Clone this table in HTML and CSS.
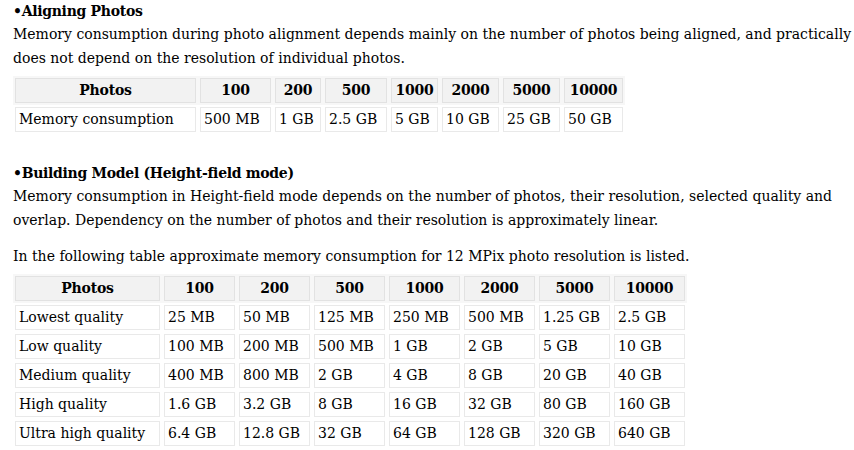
FILE: index.html
```html
<!DOCTYPE html>
<html>
<head>
<meta charset="utf-8">
<link rel="stylesheet" href="styles.css">
</head>
<body>
<div class="page">
  <h3 class="title">•Aligning Photos</h3>
  <p class="para">Memory consumption during photo alignment depends mainly on the number of photos being aligned, and practically does not depend on the resolution of individual photos.</p>
  <table class="grid grid-align">
    <tr class="head">
      <th class="w181">Photos</th>
      <th class="w71">100</th>
      <th class="w46">200</th>
      <th class="w62">500</th>
      <th class="w47">1000</th>
      <th class="w57">2000</th>
      <th class="w57">5000</th>
      <th class="w59">10000</th>
    </tr>
    <tr>
      <td>Memory consumption</td>
      <td>500 MB</td>
      <td>1 GB</td>
      <td>2.5 GB</td>
      <td>5 GB</td>
      <td>10 GB</td>
      <td>25 GB</td>
      <td>50 GB</td>
    </tr>
  </table>

  <h3 class="title title-2">•Building Model (Height-field mode)</h3>
  <p class="para">Memory consumption in Height-field mode depends on the number of photos, their resolution, selected quality and overlap. Dependency on the number of photos and their resolution is approximately linear.</p>
  <p class="para para-gap">In the following table approximate memory consumption for 12 MPix photo resolution is listed.</p>
  <table class="grid grid-model">
    <tr class="head">
      <th class="w145">Photos</th>
      <th class="w71">100</th>
      <th class="w71">200</th>
      <th class="w71">500</th>
      <th class="w71">1000</th>
      <th class="w71">2000</th>
      <th class="w71">5000</th>
      <th class="w71">10000</th>
    </tr>
    <tr>
      <td>Lowest quality</td><td>25 MB</td><td>50 MB</td><td>125 MB</td><td>250 MB</td><td>500 MB</td><td>1.25 GB</td><td>2.5 GB</td>
    </tr>
    <tr>
      <td>Low quality</td><td>100 MB</td><td>200 MB</td><td>500 MB</td><td>1 GB</td><td>2 GB</td><td>5 GB</td><td>10 GB</td>
    </tr>
    <tr>
      <td>Medium quality</td><td>400 MB</td><td>800 MB</td><td>2 GB</td><td>4 GB</td><td>8 GB</td><td>20 GB</td><td>40 GB</td>
    </tr>
    <tr>
      <td>High quality</td><td>1.6 GB</td><td>3.2 GB</td><td>8 GB</td><td>16 GB</td><td>32 GB</td><td>80 GB</td><td>160 GB</td>
    </tr>
    <tr>
      <td>Ultra high quality</td><td>6.4 GB</td><td>12.8 GB</td><td>32 GB</td><td>64 GB</td><td>128 GB</td><td>320 GB</td><td>640 GB</td>
    </tr>
  </table>
</div>
</body>
</html>
```

FILE: styles.css
```css
html, body {
  margin: 0;
  padding: 0;
  background: #ffffff;
}
body {
  font-family: "DejaVu Serif", "Liberation Serif", serif;
  font-size: 14px;
  color: #000000;
}
.page {
  width: 841px;
  padding: 0 0 0 13px;
}
.title {
  margin: 0;
  font-size: 14px;
  font-weight: bold;
  line-height: 23px;
  letter-spacing: -0.3px;
}
.title-2 {
  margin-top: 26px;
}
.para {
  margin: 0;
  line-height: 23.5px;
}
.para-gap {
  margin-top: 13px;
}
.grid {
  border-collapse: separate;
  border-spacing: 4px;
  margin-left: -2px;
  margin-top: 4px;
}
.grid-model {
  margin-top: 3px;
}
.grid th,
.grid td {
  box-sizing: border-box;
  height: 25px;
  padding: 0 3px;
  line-height: 23px;
  white-space: nowrap;
  border: 1px solid #e9e9e9;
}
.grid th {
  background: #f2f2f2;
  border-color: #e2e2e2;
  text-align: center;
  font-weight: bold;
  letter-spacing: -0.2px;
  box-shadow: 0 0 0 2px #f7f7f7;
}
.grid td {
  text-align: left;
  background: #ffffff;
}
.w181 { width: 181px; }
.w145 { width: 145px; }
.w71 { width: 71px; }
.w46 { width: 46px; }
.w62 { width: 62px; }
.w47 { width: 47px; }
.w57 { width: 57px; }
.w59 { width: 59px; }
```
